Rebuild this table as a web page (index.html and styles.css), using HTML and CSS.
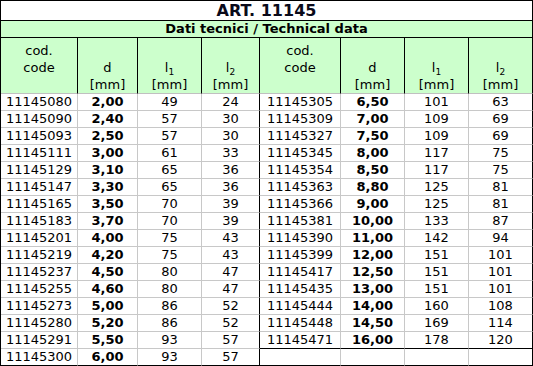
FILE: index.html
```html
<!DOCTYPE html>
<html>
<head>
<meta charset="utf-8">
<link rel="stylesheet" href="styles.css">
</head>
<body>
<div class="sheet">
  <div class="title">ART. 11145</div>
  <div class="subtitle">Dati tecnici / Technical data</div>

  <div class="hd"><span>cod.</span><span>code</span><span>&nbsp;</span></div>
  <div class="hd"><span>&nbsp;</span><span>d</span><span>[mm]</span></div>
  <div class="hd"><span>&nbsp;</span><span>l<sub class="sb">1</sub></span><span>[mm]</span></div>
  <div class="hd"><span>&nbsp;</span><span>l<sub class="sb">2</sub></span><span>[mm]</span></div>
  <div class="hd"><span>cod.</span><span>code</span><span>&nbsp;</span></div>
  <div class="hd"><span>&nbsp;</span><span>d</span><span>[mm]</span></div>
  <div class="hd"><span>&nbsp;</span><span>l<sub class="sb">1</sub></span><span>[mm]</span></div>
  <div class="hd"><span>&nbsp;</span><span>l<sub class="sb">2</sub></span><span>[mm]</span></div>

  <div class="c">11145080</div><div class="c b">2,00</div><div class="c">49</div><div class="c sep">24</div>
  <div class="c">11145305</div><div class="c b">6,50</div><div class="c">101</div><div class="c sep">63</div>

  <div class="c">11145090</div><div class="c b">2,40</div><div class="c">57</div><div class="c sep">30</div>
  <div class="c">11145309</div><div class="c b">7,00</div><div class="c">109</div><div class="c sep">69</div>

  <div class="c">11145093</div><div class="c b">2,50</div><div class="c">57</div><div class="c sep">30</div>
  <div class="c">11145327</div><div class="c b">7,50</div><div class="c">109</div><div class="c sep">69</div>

  <div class="c">11145111</div><div class="c b">3,00</div><div class="c">61</div><div class="c sep">33</div>
  <div class="c">11145345</div><div class="c b">8,00</div><div class="c">117</div><div class="c sep">75</div>

  <div class="c">11145129</div><div class="c b">3,10</div><div class="c">65</div><div class="c sep">36</div>
  <div class="c">11145354</div><div class="c b">8,50</div><div class="c">117</div><div class="c sep">75</div>

  <div class="c">11145147</div><div class="c b">3,30</div><div class="c">65</div><div class="c sep">36</div>
  <div class="c">11145363</div><div class="c b">8,80</div><div class="c">125</div><div class="c sep">81</div>

  <div class="c">11145165</div><div class="c b">3,50</div><div class="c">70</div><div class="c sep">39</div>
  <div class="c">11145366</div><div class="c b">9,00</div><div class="c">125</div><div class="c sep">81</div>

  <div class="c">11145183</div><div class="c b">3,70</div><div class="c">70</div><div class="c sep">39</div>
  <div class="c">11145381</div><div class="c b">10,00</div><div class="c">133</div><div class="c sep">87</div>

  <div class="c">11145201</div><div class="c b">4,00</div><div class="c">75</div><div class="c sep">43</div>
  <div class="c">11145390</div><div class="c b">11,00</div><div class="c">142</div><div class="c sep">94</div>

  <div class="c">11145219</div><div class="c b">4,20</div><div class="c">75</div><div class="c sep">43</div>
  <div class="c">11145399</div><div class="c b">12,00</div><div class="c">151</div><div class="c sep">101</div>

  <div class="c">11145237</div><div class="c b">4,50</div><div class="c">80</div><div class="c sep">47</div>
  <div class="c">11145417</div><div class="c b">12,50</div><div class="c">151</div><div class="c sep">101</div>

  <div class="c">11145255</div><div class="c b">4,60</div><div class="c">80</div><div class="c sep">47</div>
  <div class="c">11145435</div><div class="c b">13,00</div><div class="c">151</div><div class="c sep">101</div>

  <div class="c">11145273</div><div class="c b">5,00</div><div class="c">86</div><div class="c sep">52</div>
  <div class="c">11145444</div><div class="c b">14,00</div><div class="c">160</div><div class="c sep">108</div>

  <div class="c">11145280</div><div class="c b">5,20</div><div class="c">86</div><div class="c sep">52</div>
  <div class="c">11145448</div><div class="c b">14,50</div><div class="c">169</div><div class="c sep">114</div>

  <div class="c">11145291</div><div class="c b">5,50</div><div class="c">93</div><div class="c sep">57</div>
  <div class="c end">11145471</div><div class="c b end">16,00</div><div class="c end">178</div><div class="c sep end">120</div>

  <div class="c end">11145300</div><div class="c b end">6,00</div><div class="c end">93</div><div class="c sep end">57</div>
  <div class="c end"></div><div class="c end"></div><div class="c end"></div><div class="c sep end"></div>
</div>
</body>
</html>
```

FILE: styles.css
```css
html, body {
  margin: 0;
  padding: 0;
  background: #ffffff;
}

.sheet {
  width: 533px;
  box-sizing: border-box;
  display: grid;
  grid-template-columns: 77px 60px 64px 58px 81px 64px 64px 64px;
  border-left: 1px solid #000;
  border-top: 1px solid #000;
  font-family: "DejaVu Sans", Verdana, sans-serif;
  font-size: 13px;
  color: #000;
}

.sheet > div {
  box-sizing: border-box;
  text-align: center;
}

.title {
  grid-column: 1 / -1;
  height: 20px;
  line-height: 19px;
  font-size: 16px;
  font-weight: bold;
  border-right: 1px solid #000;
  border-bottom: 1px solid #000;
  color: #0a0a1a;
}

.subtitle {
  grid-column: 1 / -1;
  height: 17px;
  line-height: 16px;
  font-weight: bold;
  background: #ccffcc;
  border-right: 1px solid #000;
  border-bottom: 1px solid #000;
}

.hd {
  height: 56px;
  padding-top: 4px;
  background: #ccffcc;
  border-right: 1px solid #000;
  border-bottom: 1px solid #c0c0c0;
  display: flex;
  flex-direction: column;
  line-height: 17px;
}

.hd span {
  display: block;
  height: 17px;
}

.sb {
  font-size: 9px;
  line-height: 0;
  vertical-align: -3px;
}

.c {
  height: 17px;
  line-height: 16px;
  border-right: 1px solid #c8c8c8;
  border-bottom: 1px solid #c8c8c8;
}

.b {
  font-weight: bold;
}

.sep {
  border-right-color: #000 !important;
}

.end {
  border-bottom-color: #000 !important;
}
```
